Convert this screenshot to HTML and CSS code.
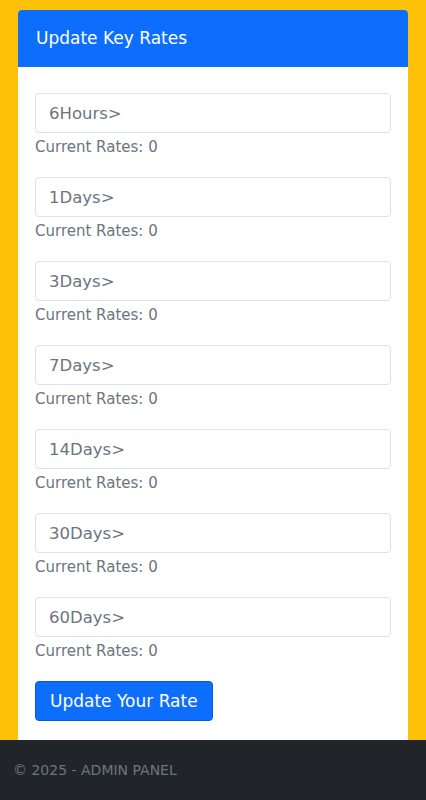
FILE: index.html
```html
<!DOCTYPE html>
<html lang="en">
<head>
    <meta charset="UTF-8">
    <meta name="viewport" content="width=device-width, initial-scale=1.0">
    <title>Admin Panel | Update Key Rates</title>
    <link rel="stylesheet" href="styles.css">
</head>
<body>
    <main class="wrap">
        <div class="card">
            <div class="card-header">Update Key Rates</div>
            <form class="card-body">
                <div class="rate-group">
                    <input class="rate-input" type="text" placeholder="6Hours>">
                    <div class="rate-current">Current Rates: 0</div>
                </div>
                <div class="rate-group">
                    <input class="rate-input" type="text" placeholder="1Days>">
                    <div class="rate-current">Current Rates: 0</div>
                </div>
                <div class="rate-group">
                    <input class="rate-input" type="text" placeholder="3Days>">
                    <div class="rate-current">Current Rates: 0</div>
                </div>
                <div class="rate-group">
                    <input class="rate-input" type="text" placeholder="7Days>">
                    <div class="rate-current">Current Rates: 0</div>
                </div>
                <div class="rate-group">
                    <input class="rate-input" type="text" placeholder="14Days>">
                    <div class="rate-current">Current Rates: 0</div>
                </div>
                <div class="rate-group">
                    <input class="rate-input" type="text" placeholder="30Days>">
                    <div class="rate-current">Current Rates: 0</div>
                </div>
                <div class="rate-group">
                    <input class="rate-input" type="text" placeholder="60Days>">
                    <div class="rate-current">Current Rates: 0</div>
                </div>
                <button class="btn-update" type="button">Update Your Rate</button>
            </form>
        </div>
    </main>

    <footer class="footer">&copy; 2025 - ADMIN PANEL</footer>
</body>
</html>
```

FILE: styles.css
```css
/* Base */
body {
    margin: 0;
    font-family: "DejaVu Sans", Verdana, sans-serif;
    background-color: #ffc107;
    color: #212529;
}

.wrap {
    padding: 10px 18px 0;
}

/* Card */
.card {
    background-color: #fff;
    border-radius: 4px 4px 0 0;
    overflow: hidden;
}

.card-header {
    background-color: #0d6efd;
    color: #fff;
    font-size: 17px;
    height: 57px;
    line-height: 56px;
    padding: 0 18px;
}

.card-body {
    padding: 26px 17px 19px;
    display: flex;
    flex-direction: column;
}

.rate-group {
    margin-bottom: 20px;
}

.rate-input {
    display: block;
    box-sizing: border-box;
    width: 100%;
    height: 40px;
    padding: 0 13px;
    border: 1px solid #dee2e6;
    border-radius: 4px;
    font-family: inherit;
    font-size: 16.5px;
    color: #212529;
    outline: none;
}

.rate-input::placeholder {
    color: #6c757d;
}

.rate-current {
    margin-top: 4px;
    font-size: 15px;
    line-height: 20px;
    color: #6c757d;
}

.btn-update {
    align-self: flex-start;
    height: 40px;
    padding: 0 14px;
    background-color: #0d6efd;
    border: 1px solid #0a58ca;
    border-radius: 4px;
    color: #fff;
    font-family: inherit;
    font-size: 17px;
    cursor: pointer;
}

/* Footer */
.footer {
    background-color: #212529;
    color: #6c757d;
    font-size: 14px;
    height: 60px;
    line-height: 60px;
    padding: 0 13px;
}
```
